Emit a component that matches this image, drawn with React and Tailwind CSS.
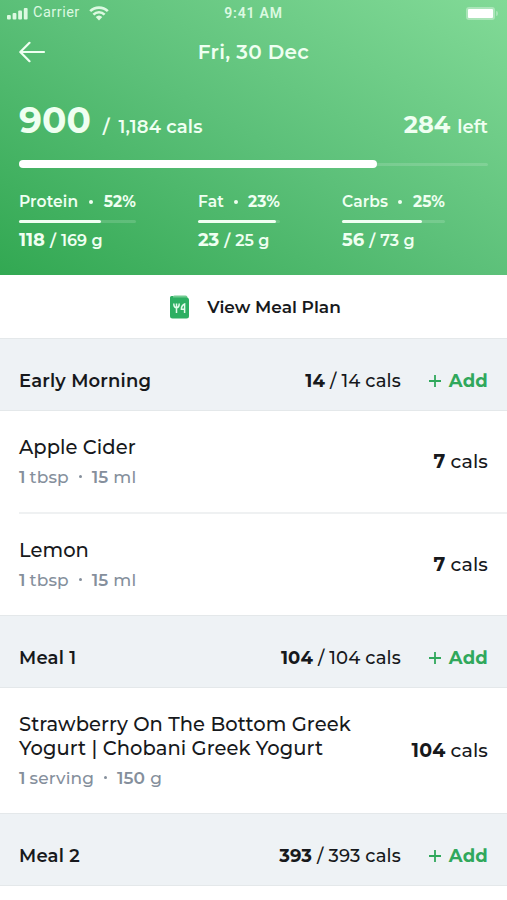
const macros = [
  { name: "Protein", share: "52%", eaten: 118, goal: 169, width: "w-[117px]", fill: "w-[82px]", gap: "mr-[62px]" },
  { name: "Fat", share: "23%", eaten: 23, goal: 25, width: "w-[82px]", fill: "w-[78px]", gap: "mr-[62px]" },
  { name: "Carbs", share: "25%", eaten: 56, goal: 73, width: "w-[103px]", fill: "w-[80px]", gap: "" },
];

function StatusBar() {
  return (
    <div className="grid h-[26px] grid-cols-3 items-center pr-[9px] pl-[7px] font-['Roboto',sans-serif] text-[#dcf9e1]">
      <div className="flex items-center">
        <svg width="21" height="13" viewBox="0 0 21 13" fill="currentColor">
          <rect x="0" y="8" width="3.8" height="4.5" rx="1" />
          <rect x="5.6" y="6" width="3.8" height="6.5" rx="1" />
          <rect x="11.2" y="3.5" width="3.8" height="9" rx="1" />
          <rect x="16.8" y="1" width="3.8" height="11.5" rx="1" />
        </svg>
        <span className="ml-[5px] text-[14.5px] tracking-[0.5px]">Carrier</span>
        <svg className="ml-[9px]" width="20" height="15" viewBox="0 0 20 15" fill="none" stroke="currentColor" strokeWidth="2.6">
          <path d="M1.2 5.2a12.5 12.5 0 0 1 17.6 0" />
          <path d="M4.4 8.6a8 8 0 0 1 11.2 0" />
          <path d="M10 14.4 6.7 11a4.8 4.8 0 0 1 6.6 0Z" fill="currentColor" stroke="none" />
        </svg>
      </div>
      <span className="pl-[2px] text-center text-[14px] font-semibold tracking-[0.8px]">9:41 AM</span>
      <div className="flex items-center justify-end">
        <div className="rounded-[3px] bg-white/35 p-[2px]">
          <div className="h-[9px] w-[25px] rounded-[1px] bg-white" />
        </div>
        <div className="ml-px h-[5px] w-[2px] rounded-r bg-white/30" />
      </div>
    </div>
  );
}

function Macro({ name, share, eaten, goal, width, fill, gap }) {
  return (
    <div className={`${width} ${gap} whitespace-nowrap`}>
      <div className="flex h-[26px] items-center justify-between text-[15.5px] font-semibold tracking-[0.1px]">
        <span>{name}</span>
        <span className="size-[4px] rounded-full bg-current" />
        <span className="font-bold">{share}</span>
      </div>
      <div className="mt-[5px] h-[3px] rounded-full bg-white/15">
        <div className={`h-[3px] rounded-full bg-[#f0fff2] ${fill}`} />
      </div>
      <div className="mt-[4px] flex h-[26px] items-baseline gap-[5px] text-[16px] font-semibold">
        <span className="text-[18px] font-bold">{eaten}</span>
        <span>/</span>
        <span>{goal} g</span>
      </div>
    </div>
  );
}

function MealPlanIcon() {
  return (
    <svg width="19" height="24" viewBox="0 0 19 24" fill="none">
      <rect x="2.5" y="0.5" width="15" height="7" rx="2" fill="#72cb91" />
      <path d="M0 2.5Q0 1 1.5 1H3v1.5h13.5A2.5 2.5 0 0 1 19 5v16a2.5 2.5 0 0 1-2.5 2.5h-14A2.5 2.5 0 0 1 0 21Z" fill="#2daf62" />
      <path d="M3.8 8.5c0 3 1 4.2 2.7 4.2s2.7-1.2 2.7-4.2M6.5 8.5V18M14.6 18V9c-2 .8-3.2 3-3.2 5.2h3.2" stroke="#e3fbeb" strokeWidth="1.5" />
    </svg>
  );
}

function SectionHeader({ title, cals }) {
  return (
    <div className="flex h-[73px] items-center border-y border-[#e4e8ea] bg-[#eef2f5] px-[19px] pt-[13px] text-[18px]">
      <h2 className="flex-1 font-semibold tracking-[0.2px]">{title}</h2>
      <p className="flex gap-[5px] font-medium tracking-[0.1px]">
        <span className="font-bold">{cals}</span>
        <span>/</span>
        <span>{cals} cals</span>
      </p>
      <button className="ml-[28px] flex items-center gap-[8px] font-bold tracking-[0.2px] text-[#30a85c]">
        <svg width="12" height="12" viewBox="0 0 12 12" stroke="currentColor" strokeWidth="1.8">
          <path d="M0 6h12M6 0v12" />
        </svg>
        <span>Add</span>
      </button>
    </div>
  );
}

function Food({ lines, amount, unit, weight, weightUnit, cals, height }) {
  return (
    <div className={`flex items-center pr-[19px] font-medium ${height}`}>
      <div className="flex-1 pt-px">
        {lines.map((line) => (
          <p key={line} className="text-[19.5px] leading-[24px] tracking-[0.06px]">{line}</p>
        ))}
        <p className="mt-[5px] flex items-center text-[17px] leading-[26px] tracking-[0.1px] text-[#858f9c]">
          <span className="font-semibold">{amount}</span>
          <span className="ml-[4px]">{unit}</span>
          <span className="mx-[10px] size-[3px] rounded-full bg-current" />
          <span className="font-semibold">{weight}</span>
          <span className="ml-[5px]">{weightUnit}</span>
        </p>
      </div>
      <p className="pt-[2px] text-[19px] tracking-[0.1px]">
        <span className="font-bold">{cals}</span> cals
      </p>
    </div>
  );
}

export default function App() {
  return (
    <main className="h-[900px] w-[507px] overflow-hidden bg-white font-['Montserrat','Inter',sans-serif] text-[#17191c]">
      <header className="h-[275px] bg-[linear-gradient(30deg,#32a852_0%,#5cc079_50%,#82da97_100%)] text-[#effff1]">
        <StatusBar />
        <div className="grid h-[52px] grid-cols-3 items-center px-[19px]">
          <svg width="27" height="22" viewBox="0 0 27 22" fill="none" stroke="currentColor" strokeWidth="2.2" strokeLinecap="round" strokeLinejoin="round">
            <path d="M25 11H1.5M10.500 1.800 1.300 11l9.200 9.200" />
          </svg>
          <h1 className="text-center text-[20px] font-semibold tracking-[0.3px]">Fri, 30 Dec</h1>
        </div>
        <div className="flex h-[62px] items-baseline px-[19px] pt-[18px] text-[18px] font-semibold">
          <span className="text-[36px] leading-[48px] font-bold">900</span>
          <span className="ml-[12px]">/</span>
          <span className="ml-[9px] flex-1 tracking-[0.15px]">1,184 cals</span>
          <span className="mr-[7px] text-[24px] font-bold">284</span>
          <span>left</span>
        </div>
        <div className="mx-[19px] mt-[20px] flex h-[8px] items-center">
          <div className="h-[8px] w-[358px] rounded-full bg-white" />
          <div className="h-[3px] flex-1 rounded-r-full bg-white/15" />
        </div>
        <div className="mt-[21px] flex px-[19px]">
          {macros.map((macro) => (
            <Macro key={macro.name} {...macro} />
          ))}
        </div>
      </header>

      <button className="flex h-[63px] w-full items-center justify-center gap-[18px] pl-[4px] text-[17px] font-semibold">
        <MealPlanIcon />
        <span className="pt-[3px]">View Meal Plan</span>
      </button>

      <SectionHeader title="Early Morning" cals={14} />
      <div className="pl-[19px]">
        <Food lines={["Apple Cider"]} amount="1" unit="tbsp" weight="15" weightUnit="ml" cals={7} height="h-[101px]" />
        <div className="border-t-2 border-[#eff1f2]">
          <Food lines={["Lemon"]} amount="1" unit="tbsp" weight="15" weightUnit="ml" cals={7} height="h-[101px]" />
        </div>
      </div>

      <SectionHeader title="Meal 1" cals={104} />
      <div className="pl-[19px]">
        <Food
          lines={["Strawberry On The Bottom Greek", "Yogurt | Chobani Greek Yogurt"]}
          amount="1"
          unit="serving"
          weight="150"
          weightUnit="g"
          cals={104}
          height="h-[125px]"
        />
      </div>

      <SectionHeader title="Meal 2" cals={393} />
    </main>
  );
}
